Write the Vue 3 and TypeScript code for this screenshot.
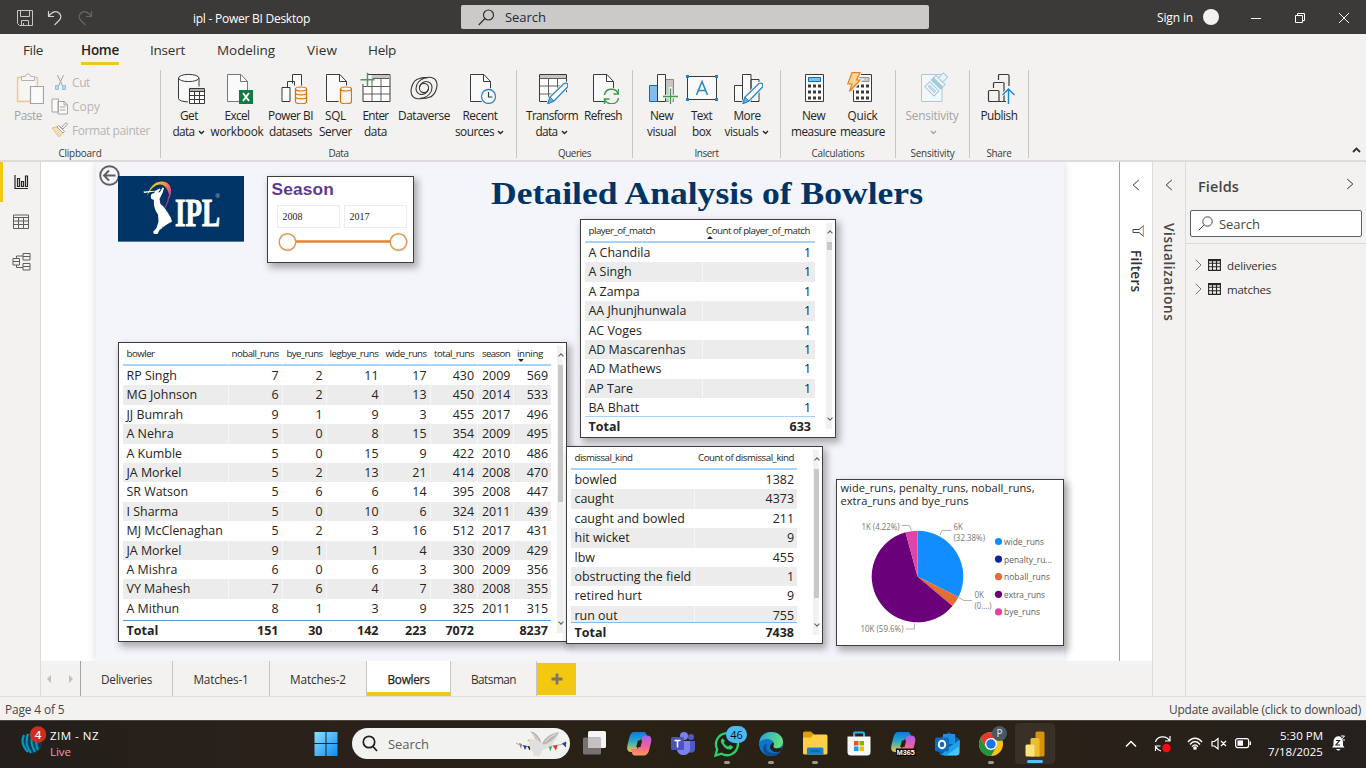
<script setup lang="ts">
type Line = [text: string, width: number]
interface Tool { icon: string; w: number; lines: Line[]; chevron?: boolean; off?: boolean }
interface Group { name: string; labelW: number; w: number; pad: number; tools: Tool[] }

/* Spreads the letters of a label so that it takes the given length along its writing direction. */
const vFit = {
  mounted(el: HTMLElement, binding: { value: number }) {
    const box = el.getBoundingClientRect()
    const length = Math.max(box.width, box.height > 40 ? box.height : 0)
    const count = (el.textContent ?? '').trim().length
    if (count > 0) el.style.letterSpacing = `${((binding.value - length) / count).toFixed(3)}px`
  },
}

const page = '<path d="M6.5 2.5H20l6.500 7V29.500H6.500z" fill="#fafafa" stroke="#3b3a39"/><path d="M19.500 2.500V9.500H26.500" fill="none" stroke="#3b3a39"/>'
const drum = '<path d="M20.500 17v12.500c0 3 11 3 11 0V17" fill="#fff5e8" stroke="#e07000" stroke-width="1.200"/><ellipse cx="26" cy="17" rx="5.500" ry="2" fill="#fafafa" stroke="#e07000" stroke-width="1.200"/>'
const pencil = '<path d="M12 31.500l2-6.500L28 11.500q2-1 3.200.3t.3 3.200L18 29z" fill="#fafafa" stroke="#f3f2f1" stroke-width="3"/><path d="M12 31.500l2-6.500L28 11.500q2-1 3.200.3t.3 3.200L18 29z" fill="#fafafa" stroke="#2b88c8" stroke-width="1.300"/><path d="M12 31.500l2-6.500 4 4z" fill="#69afe5" stroke="#2b88c8"/>'
const keys = '<path d="M10 12.500h3v3h-3zm5 0h3v3h-3zm5 0h3v3h-3zm-10 6h3v3h-3zm5 0h3v3h-3zm5 0h3v3h-3zm-10 6h3v3h-3zm5 0h3v3h-3zm5 0h3v3h-3z" fill="#3b3a39"/>'
const icons: Record<string, string> = {
  paste: '<path d="M5.500 5.500h20v24h-20z" fill="#fbeeda" stroke="#eec690" stroke-width="1.300"/><path d="M8 7.500h15v20H8z" fill="#f7f6f5"/><path d="M9.500 8.500v-4h4c0-3.500 5-3.500 5 0h4v4z" fill="#f7f6f5" stroke="#b5b3b1"/><path d="M18.500 14.500h13v17h-13z" fill="#fafafa" stroke="#a5a3a1" stroke-width="1.200"/>',
  getdata: '<path d="M5.500 6v20.500c0 4.500 20.500 4.500 20.500 0V6" fill="#fafafa" stroke="#3b3a39"/><ellipse cx="15.700" cy="6" rx="10.200" ry="3.600" fill="#fafafa" stroke="#3b3a39"/><path d="M15 14.500h18v18H15z" fill="#f3f2f1"/><path d="M16.500 16.500h15v15h-15z" fill="#fff" stroke="#3b3a39"/><path d="M17 17h14v2.500H17z" fill="#b3b0ad"/><path d="M16.500 19.500h15m-15 4h15m-15 4h15m-10-8v12m5-12v12" stroke="#3b3a39" fill="none"/>',
  excel: '<path d="M6.500 2.500H20l6.500 7V29.500H6.500z" fill="#fafafa" stroke="#797775"/><path d="M19.500 2.500V9.500H26.500" fill="none" stroke="#797775"/><path d="M18 18h14v14H18z" fill="#107c41"/><path d="M22 21l6 8m0-8l-6 8" stroke="#fff" stroke-width="1.900"/>',
  datasets: '<path d="M17.500 11.500v-9h9v14m-14-1v-6h7v20m-12.500-14h8v14H7z" fill="#fafafa" stroke="#3b3a39"/><path d="M19 13.500h13V32H19z" fill="#f3f2f1"/>' + drum + '<path d="M20.500 21c0 2.500 11 2.500 11 0m-11 4c0 2.500 11 2.500 11 0" fill="none" stroke="#e07000" stroke-width="1.200"/>',
  sql: page + '<path d="M18.500 13.500h14v19h-14z" fill="#f3f2f1"/>' + drum,
  enter: '<g transform="translate(-.5 0)"><path d="M3.500 2.500h27v27h-27z" fill="#fff" stroke="#3b3a39"/><path d="M12 3h18v3.500H12z" fill="#c8c6c4"/><path d="M3.500 14.500h27m-27 7.500h27M12.500 7v22m9-22v22M13 6.500h17" stroke="#605e5c" fill="none"/><path d="M0 0h8v12H0z" fill="#f3f2f1"/><path d="M1 7.700h14M8 .7v14" stroke="#4a9b5c" stroke-width="1.500"/></g>',
  dataverse: '<g fill="none" stroke="#3b3a39" stroke-width="1.100"><circle cx="16" cy="16" r="4.600"/><path d="M20.500 17c-1 4-5 6.500-9 5-4.500-2-4.500-8-1-12 3.500-4 9-5.500 13-4.500 5 1.200 6.500 6 5 11C27 22 23.500 25 20.500 25.500c-2 .8-5 1.200-8 .5"/><path d="M11.500 15c1-4 5-6.500 9-5 4.500 2 4.500 8 1 12-3.500 4-9 5.500-13 4.500-5-1.200-6.500-6-5-11C5 10 8.500 7 11.500 6.500c2-.8 5-1.200 8-.5"/></g>',
  recent: page + '<circle cx="24.500" cy="24.500" r="8.500" fill="#f3f2f1"/><circle cx="24.500" cy="24.500" r="7" fill="#fafafa" stroke="#2b88c8" stroke-width="1.300"/><path d="M24.500 20v5h4" fill="none" stroke="#3b3a39" stroke-width="1.200"/>',
  transform: '<path d="M3.500 2.500h27v27h-27z" fill="#fff" stroke="#3b3a39"/><path d="M4 3h26v3.500H4z" fill="#c8c6c4"/><path d="M3.500 6.500h27m-27 7.500h27m-27 8h27M12.500 7v22m9-22v22" stroke="#605e5c" fill="none"/><path d="M24 20h9v12H17z" fill="#f3f2f1"/>' + pencil,
  refresh: page + '<circle cx="24.500" cy="24.500" r="9" fill="#f3f2f1"/><path d="M17.500 23c1-7 11-8 14-1m0-5v5h-5m5 4c-1 7-11 8-14 1m0 5v-5h5" fill="none" stroke="#3f9b4f" stroke-width="1.500"/>',
  visual: '<path d="M3.500 13.500h8v16h-8z" fill="#83bdec" stroke="#0f6cbd"/><path d="M19.500 7.500h8v22h-8z" fill="#c8c6c4" stroke="#8a8886"/><path d="M11.500 2.500h8v27h-8z" fill="#fafafa" stroke="#3b3a39"/><path d="M24.500 15v17M16.500 24.500h16" stroke="#f3f2f1" stroke-width="3.500"/><path d="M24.500 16.500v15.500M17 24.500h15.500" stroke="#3f9b4f" stroke-width="1.300"/>',
  textbox: '<path d="M1.500 4.500h29v23h-29z" fill="#fafafa" stroke="#3b3a39"/><path d="M0 3h3v3H0zm29 0h3v3h-3zM0 26h3v3H0zm29 0h3v3h-3z" fill="#1a86d0"/><path d="M10.500 23L16 9.500 21.500 23M12.500 18.500h7" fill="none" stroke="#2b88c8" stroke-width="1.600"/>',
  more: '<path d="M3.500 13.500h8v16h-8zM20 7.500h8v22h-8zM11.500 2.500h8.500v27h-8.500z" fill="#fafafa" stroke="#3b3a39"/>' + pencil,
  measure: '<path d="M7.500 2.500h18v27h-18z" fill="#fafafa" stroke="#3b3a39"/><path d="M10.500 5.500h12v4h-12z" fill="#83bdec" stroke="#0f6cbd"/>' + keys,
  quick: '<path d="M6.500 2.500h18v27h-18z" fill="#fafafa" stroke="#3b3a39"/><path d="M11 5.500h11v4H11z" fill="#c8c6c4" stroke="#979593"/><g transform="translate(-1 0)">' + keys + '</g><path d="M5 1h8L9.500 8H14L2 20.500 5.500 12H1z" fill="#f3f2f1" stroke="#f3f2f1" stroke-width="3"/><path d="M5 .7h8L9.500 8H13L2.500 19.500 5 12H.7z" fill="#fcd79b" stroke="#e58022" stroke-width="1.200"/>',
  sensitivity: '<path d="M5.500 2.500h20.500v27H5.500z" fill="#f5f6f7" stroke="#9fcbe6"/><g transform="translate(15.500 16.500) rotate(45)" stroke="#9fcbe6" fill="#f5f6f7"><path d="M-6-3.500H7v7H-6z"/><path d="M-3.500-.8h8v1.600h-8z"/></g><g transform="translate(23.500 9) rotate(45)" stroke="#9fcbe6" fill="#f3f2f1"><path d="M-6.500 2h13v3h-13z" fill="#9fcbe6"/><path d="M-6.500-1.500h13v3.500h-13zM-3-8.500h6v7h-6z"/></g>',
  publish: '<path d="M15.500 8V3.500q0-1 1-1H25q1 0 1 1V14M10.500 16v-4.500q0-1 1-1H20q1 0 1 1V29M5.500 19.500q0-1 1-1H15q1 0 1 1v10H6.500q-1 0-1-1zM16 29.500h7" fill="none" stroke="#3b3a39" stroke-width="1.200"/><path d="M25.500 32V17M19.500 23l6-6 6 6" fill="none" stroke="#f3f2f1" stroke-width="3"/><path d="M25.500 32V17M19.500 23l6-6 6 6" fill="none" stroke="#1f86c8" stroke-width="1.400"/>',
}

const menu: { t: string; w: number; gap: number; on?: boolean }[] = [
  { t: 'File', w: 20, gap: 23 }, { t: 'Home', w: 38, gap: 38, on: true }, { t: 'Insert', w: 35, gap: 31 },
  { t: 'Modeling', w: 58, gap: 32 }, { t: 'View', w: 30, gap: 32 }, { t: 'Help', w: 28, gap: 31 },
]

const groups: Group[] = [
  { name: 'Data', labelW: 20, w: 356, pad: 4, tools: [
    { icon: 'getdata', w: 48, lines: [['Get', 18], ['data', 22]], chevron: true },
    { icon: 'excel', w: 48, lines: [['Excel', 25], ['workbook', 53]] },
    { icon: 'datasets', w: 59, lines: [['Power BI', 45], ['datasets', 43]] },
    { icon: 'sql', w: 31, lines: [['SQL', 21], ['Server', 33]] },
    { icon: 'enter', w: 49, lines: [['Enter', 26], ['data', 23]] },
    { icon: 'dataverse', w: 48, lines: [['Dataverse', 52]] },
    { icon: 'recent', w: 64, lines: [['Recent', 35], ['sources', 39]], chevron: true },
  ] },
  { name: 'Queries', labelW: 33, w: 116, pad: 7, tools: [
    { icon: 'transform', w: 56, lines: [['Transform', 52], ['data', 22]], chevron: true },
    { icon: 'refresh', w: 46, lines: [['Refresh', 38]] },
  ] },
  { name: 'Insert', labelW: 24, w: 148, pad: 9, tools: [
    { icon: 'visual', w: 39, lines: [['New', 23], ['visual', 29]] },
    { icon: 'textbox', w: 41, lines: [['Text', 21], ['box', 19]] },
    { icon: 'more', w: 50, lines: [['More', 27], ['visuals', 34]], chevron: true },
  ] },
  { name: 'Calculations', labelW: 53, w: 115, pad: 8, tools: [
    { icon: 'measure', w: 49, lines: [['New', 23], ['measure', 45]] },
    { icon: 'quick', w: 49, lines: [['Quick', 30], ['measure', 45]] },
  ] },
  { name: 'Sensitivity', labelW: 44, w: 74, pad: 0, tools: [
    { icon: 'sensitivity', w: 72, lines: [['Sensitivity', 53], ['', 0]], chevron: true, off: true },
  ] },
  { name: 'Share', labelW: 25, w: 59, pad: 0, tools: [{ icon: 'publish', w: 58, lines: [['Publish', 37]] }] },
]

const bowlerHead: Line[] = [['bowler', 28], ['noball_runs', 47], ['bye_runs', 36], ['legbye_runs', 49], ['wide_runs', 41], ['total_runs', 40], ['season', 28], ['inning', 26]]
const bowlers: (string | number)[][] = [
  ['RP Singh', 7, 2, 11, 17, 430, 2009, 569],
  ['MG Johnson', 6, 2, 4, 13, 450, 2014, 533],
  ['JJ Bumrah', 9, 1, 9, 3, 455, 2017, 496],
  ['A Nehra', 5, 0, 8, 15, 354, 2009, 495],
  ['A Kumble', 5, 0, 15, 9, 422, 2010, 486],
  ['JA Morkel', 5, 2, 13, 21, 414, 2008, 470],
  ['SR Watson', 5, 6, 6, 14, 395, 2008, 447],
  ['I Sharma', 5, 0, 10, 6, 324, 2011, 439],
  ['MJ McClenaghan', 5, 2, 3, 16, 512, 2017, 431],
  ['JA Morkel', 9, 1, 1, 4, 330, 2009, 429],
  ['A Mishra', 6, 0, 6, 3, 300, 2009, 356],
  ['VY Mahesh', 7, 6, 4, 7, 380, 2008, 355],
  ['A Mithun', 8, 1, 3, 9, 325, 2011, 315],
]
const bowlerTotal = ['Total', 151, 30, 142, 223, 7072, '', 8237]

const players = ['A Chandila', 'A Singh', 'A Zampa', 'AA Jhunjhunwala', 'AC Voges', 'AD Mascarenhas', 'AD Mathews', 'AP Tare', 'BA Bhatt']
const dismissals: [string, number][] = [
  ['bowled', 1382], ['caught', 4373], ['caught and bowled', 211], ['hit wicket', 9],
  ['lbw', 455], ['obstructing the field', 1], ['retired hurt', 9], ['run out', 755],
]

const slices = [
  { name: 'wide_runs', w: 40, share: 32.38, color: '#118dff' },
  { name: 'penalty_ru...', w: 48, share: 0, color: '#12239e' },
  { name: 'noball_runs', w: 46, share: 3.8, color: '#e66c37' },
  { name: 'extra_runs', w: 41, share: 59.6, color: '#6b007b' },
  { name: 'bye_runs', w: 36, share: 4.22, color: '#e044a7' },
]
const wedge = (i: number): string => {
  const from = slices.slice(0, i).reduce((sum, s) => sum + s.share, 0)
  const point = (p: number) => {
    const a = (p / 100) * Math.PI * 2
    return `${(80.5 + 45.8 * Math.sin(a)).toFixed(2)} ${(96.5 - 45.8 * Math.cos(a)).toFixed(2)}`
  }
  const to = from + slices[i].share
  return `M80.5 96.5L${point(from)}A45.8 45.8 0 ${slices[i].share > 50 ? 1 : 0} 1 ${point(to)}Z`
}

const pages: { t: string; w: number; tw: number; on?: boolean }[] = [
  { t: 'Deliveries', w: 92, tw: 51 }, { t: 'Matches-1', w: 97, tw: 55 }, { t: 'Matches-2', w: 97, tw: 56 },
  { t: 'Bowlers', w: 84, tw: 42, on: true }, { t: 'Batsman', w: 86, tw: 45 },
]

const copilot = '<path d="M11 4h9.500c2.500 0 3 2 3.500 4.500l.5 2h-4.500c-2.500 0-3.500 1.500-4.500 5l-1.500 5c-1 3-2 3.500-4 3.500H8c-3.500 0-4.500-3-3.500-7l2-8C7.500 5.500 9 4 11 4z" fill="url(#gBlue)"/><path d="M21 27.500h-9c-2.500 0-3-2-3.500-4.500L8 21h4.500c2.500 0 3.500-1.500 4.500-5l1.500-5c1-3 2-3.500 4-3.500h2c3.500 0 4.500 3 3.500 7l-2 8c-1 3.500-3 5-5 5z" fill="url(#gPink)"/><path d="M15 12.500h4.200L17.500 19h-4.300z" fill="#2a2116"/>'
const apps: { id: string; art: string; run?: boolean; badge?: string }[] = [
  { id: 'taskview', art: '<rect x="9" y="3" width="18" height="17" rx="1.500" fill="#f5f5f5"/><rect x="4" y="9.500" width="18" height="17" rx="1.500" fill="#757371"/><path d="M9 9.500h13V20H9z" fill="#c3c2c1"/>' },
  { id: 'copilot', art: copilot },
  { id: 'teams', art: '<circle cx="24" cy="9" r="3" fill="#5059c9"/><circle cx="17" cy="8" r="4" fill="#7b83eb"/><path d="M20 13h8v8c0 5-8 5-8 0z" fill="#5059c9"/><path d="M10 13h13v8c0 8-13 8-13 0z" fill="#7b83eb"/><rect x="4" y="9" width="13" height="13" rx="1.500" fill="#4b53bc"/><path d="M7.500 12.500h6m-3 0v7" stroke="#fff" stroke-width="1.500"/>' },
  { id: 'whatsapp', run: true, badge: '46', art: '<path d="M4.500 27.500l1.700-6.200a11 11 0 1 1 4.200 4.400z" fill="#241f16" stroke="#25d366" stroke-width="2.300"/><path d="M12 10.500c-2 0-3 3-1 5.500 2 3.500 5 6 8.500 5.500 2-.5 3-2.500 2-3.200l-2.600-1.300-1.600 1.600c-2-.5-4-2.600-4.500-4.200l1.200-1.400z" fill="#25d366"/>' },
  { id: 'edge', run: true, art: '<circle cx="16" cy="16" r="12" fill="#1274c4"/><path d="M4.500 14C5 8 10 4 16 4c8 0 12 5 12 10 0 4-3 6-7 6-3 0-4-1-2-3 1-5-8-9-14.500-3z" fill="url(#gEdge)"/><path d="M12 16c-3 7 4 12 14 7-4 7-14 6-17 1-2-4-1-7 3-8z" fill="#0b4f9e"/><path d="M19 16c-1.500 3 0 5 4 4.500 2-.3 4-1.300 4-1.300L26 23c-6 2.500-11 0-11-4 0-3 4-6 4-3z" fill="#262017"/>' },
  { id: 'files', run: true, art: '<path d="M4 5q0-1.500 1.500-1.500H12L15 7v6H4z" fill="#dd9b00"/><rect x="4" y="6.500" width="24.500" height="20" rx="1.500" fill="#ffcf48"/><path d="M4 5.500h11l-3 4H4z" fill="#e0a100"/><path d="M9 19.500h14q1.500 0 1.500 1.500v5.500H8V21q0-1.500 1-1.500z" fill="#1580d0"/><path d="M12 23h9" stroke="#0a5ea8" stroke-width="1.500"/>' },
  { id: 'store', art: '<path d="M11 10V5.500q0-1 1-1h8q1 0 1 1V10" fill="none" stroke="#2bb3ef" stroke-width="2"/><path d="M4.500 8.500h23V24q0 3.500-3.500 3.500H8q-3.500 0-3.500-3.500z" fill="#f8f8f8"/><path d="M11 13h4.500v4.500H11z" fill="#f25022"/><path d="M16.500 13H21v4.500h-4.500z" fill="#7fba00"/><path d="M11 18.500h4.500V23H11z" fill="#00a4ef"/><path d="M16.500 18.500H21V23h-4.500z" fill="#ffb900"/>' },
  { id: 'm365', art: copilot + '<path d="M9 20.500h19.500v7.500H9z" fill="#050505"/><text x="9.700" y="27" font-size="7.200" font-weight="700" fill="#fff" textLength="18" font-family="Liberation Sans">M365</text>' },
  { id: 'outlook', art: '<path d="M8 11L18 4l10.500 7v13q0 3.500-3.500 3.500H12q-4 0-4-4z" fill="#0c59a4"/><path d="M12 6h12v10H12z" fill="#1b8fe0"/><path d="M28.500 12v12q0 3.500-3.500 3.500H13z" fill="#3ecbf5"/><path d="M18 19l10.500-7v6L16 27H10z" fill="#1aa1e8"/><rect x="4" y="9.500" width="14" height="14" rx="2" fill="#0f6cbd"/><ellipse cx="11" cy="16.500" rx="3.200" ry="3.700" fill="none" stroke="#fff" stroke-width="2"/>' },
  { id: 'chrome', run: true, badge: 'P', art: '<circle cx="16" cy="16" r="12" fill="#fbc116"/><path d="M5.600 10A12 12 0 0 1 26.400 10H16l-5 9z" fill="#e33b2e"/><path d="M5.600 10A12 12 0 0 0 16 28l5.200-9H10.800z" fill="#229342"/><circle cx="16" cy="16" r="6" fill="#fff"/><circle cx="16" cy="16" r="4.700" fill="#1a73e8"/>' },
  { id: 'powerbi', art: '<path d="M16.500 5q0-1.500 1.500-1.500h6Q25.500 3.500 25.500 5v22q0 1.500-1.500 1.500h-7.500z" fill="#d9930a"/><path d="M11.500 11.500q0-1.500 1.500-1.500h6q1.500 0 1.500 1.500v17h-9z" fill="#edbd2e"/><path d="M6.500 18q0-1.500 1.500-1.500h6q1.500 0 1.500 1.500v10.500H8q-1.500 0-1.500-1.500z" fill="#fae27f"/>' },
]
</script>

<template>
  <div class="window">
    <header class="titlebar">
      <div class="quick">
        <svg width="16" height="16" viewBox="0 0 16 16" fill="none" stroke="#c8c6c4"><path d="M.5.500h15v15H2.500l-2-2zM3.500.500v6h9v-6M4.500 15.500v-5h7v5M6.500 13v2.500" /></svg>
        <svg width="16" height="16" viewBox="0 0 16 16" fill="none" stroke="#d2d0ce" stroke-width="1.200"><path d="M1.500 1v5.500H7M1.500 6.500C5 1 10 .5 12.500 3.500c2.500 3 1 5.500-.5 7L7.500 15" /></svg>
        <svg width="16" height="16" viewBox="0 0 16 16" fill="none" stroke="#686563" stroke-width="1.200"><path d="M14.500 1v5.500H9M14.500 6.500C11 1 6 .5 3.500 3.500c-2.500 3-1 5.500.5 7L8.500 15" /></svg>
      </div>
      <span class="doc"><span v-fit="117" class="fit">ipl - Power BI Desktop</span></span>
      <div class="finder">
        <svg width="17" height="17" viewBox="0 0 17 17" fill="none" stroke="#323130" stroke-width="1.200"><circle cx="10.500" cy="6" r="5" /><path d="M7 9.500L.700 16" /></svg>
        <span v-fit="41" class="fit">Search</span>
      </div>
      <div class="account"><span v-fit="36" class="fit">Sign in</span><i class="avatar"></i></div>
      <svg class="winctl" width="126" height="34" viewBox="0 0 126 34" fill="none" stroke="#fff"><path d="M11 18.500h10M55.500 15.500h7v7h-7zM57.500 15.500v-2h7v7h-2M99 13l10 10m0-10l-10 10" /></svg>
    </header>

    <nav class="menu">
      <span v-for="m in menu" :key="m.t" class="menu-item" :class="{ on: m.on }" :style="{ marginLeft: m.gap + 'px', width: m.w + 'px' }"><span v-fit="m.w" class="fit">{{ m.t }}</span></span>
    </nav>

    <section class="ribbon">
      <div class="group clipboard">
        <div class="tools">
          <div class="tool off paste">
            <svg width="32" height="32" viewBox="0 0 32 32" v-html="icons.paste"></svg>
            <span class="tool-line"><span v-fit="28" class="fit">Paste</span></span>
          </div>
          <div class="clip-list">
            <div class="clip"><svg width="18" height="18" viewBox="0 0 18 18" fill="none" stroke="#a5a3a1"><path d="M6.500 2l5 11M12.500 2l-5 11" /><path d="M4.500 12.500h3v4h-3zm7 0h3v4h-3z" fill="#b9dbf0" stroke="#8fc3e3" /></svg><span v-fit="18" class="fit">Cut</span></div>
            <div class="clip"><svg width="18" height="18" viewBox="0 0 18 18" fill="#fafafa" stroke="#a5a3a1"><path d="M1 2h6.500v13H1zM7 4.500h6.500l3 3.500v9H7z" /><path d="M9 10h5.500M9 13h5.500M13 4.500V8h3.500" fill="none" /></svg><span v-fit="28" class="fit">Copy</span></div>
            <div class="clip"><svg width="18" height="18" viewBox="0 0 18 18" fill="#f7f6f5" stroke="#a5a3a1"><path d="M1 7l8-2 4 5-5 6z" fill="#fbdcb8" stroke="#e8bd8e" /><path d="M7.500 4.500l6 6-1.500 1.500L6 6zM10.500 6.500L15 1.500l1.500 1.500-4.500 5z" /></svg><span v-fit="78" class="fit">Format painter</span></div>
          </div>
        </div>
        <div class="group-name"><span v-fit="43" class="fit">Clipboard</span></div>
      </div>
      <div v-for="g in groups" :key="g.name" class="group" :style="{ width: g.w + 'px' }">
        <div class="tools" :style="{ paddingLeft: g.pad + 'px' }">
          <div v-for="t in g.tools" :key="t.icon" class="tool" :class="{ off: t.off }" :style="{ width: t.w + 'px' }">
            <svg width="32" height="32" viewBox="0 0 32 32" v-html="icons[t.icon]"></svg>
            <span v-for="(l, i) in t.lines" :key="i" class="tool-line">
              <span v-fit="l[1]" class="fit">{{ l[0] }}</span>
              <svg v-if="t.chevron && i === 1" class="chev" width="7" height="5" viewBox="0 0 7 5"><path d="M1 1l2.500 2.500L6 1" fill="none" stroke="currentColor" stroke-width="1.400" /></svg>
            </span>
          </div>
        </div>
        <div class="group-name"><span v-fit="g.labelW" class="fit">{{ g.name }}</span></div>
      </div>
      <svg class="collapse" width="9" height="6" viewBox="0 0 9 6"><path d="M1 5l3.500-3.500L8 5" fill="none" stroke="#323130" stroke-width="1.800" /></svg>
    </section>

    <main class="work">
      <aside class="views">
        <div class="view on"><svg width="16" height="16" viewBox="0 0 16 16" fill="none" stroke="#252423" stroke-width="1.200"><path d="M1 1v13.500h13M3.500 4.500h2v8h-2zM7.500 7.500h2v5h-2zM11.500 2h2v10.500h-2z" /></svg></div>
        <div class="view"><svg width="16" height="16" viewBox="0 0 16 16" fill="none" stroke="#605e5c"><path d="M.5 1h15v13.500H.5zM.5 3.500h15M.5 7h15M.5 10.500h15M5.500 3.500v11M10.500 3.500v11" /></svg></div>
        <div class="view"><svg width="19" height="19" viewBox="0 1 19 19" fill="none" stroke="#605e5c"><path d="M1 6.500h6.500v6.500H1zM1 9.500h6.500M11 1.500h7V8h-7zM11 4.500h7M11 11.500h7V18h-7zM11 14.500h7M4.500 6.500V4H11M4.500 13v2.500H11" /></svg></div>
      </aside>

      <div class="center">
        <div class="stage">
          <div class="report">
            <svg class="back" width="21" height="21" viewBox="0 0 21 21" fill="none" stroke="#605e5c" stroke-width="1.900"><circle cx="10.500" cy="10.500" r="9.300" /><path d="M16.500 10.500H5M10 5.500l-5 5 5 5" /></svg>

            <svg class="logo" width="126" height="66" viewBox="0 0 126 66">
              <path d="M0 0h126v66H0z" fill="#003366" /><path d="M0 65.500h126" stroke="#5c7896" />
              <path d="M51 20c-1 7-4 13-9 18" fill="none" stroke="#a8358f" stroke-width="1.400" />
              <path d="M29 20C31 12 36 6 43 5.500c8-.5 11 6 10 12l-1.500 5C51 14 47 8.500 42 8.500c-5 0-9 4-13 11.500z" fill="url(#gBall)" />
              <path d="M25.500 15.500l12-.7 4-2.300 1 1-2.500 3 2-.5 2.500-4.500 1.500.5-1.500 5-3 6 1 5c5 4 8 10 10 13l1.500 4.500-6 4-6.500 4.500-2 4h-3.500l-1-2 3.500-4 2-6.500-.5-7c-4-5-4.500-11-4-15.500l-1.500-3.500 2-3 .5-1-11 1.500z" fill="#fff" />
              <path d="M52 47l-8 5M37.500 58.500h3" stroke="#003366" fill="none" stroke-width=".8" />
              <circle cx="36" cy="20.500" r="3.200" fill="#fff" />
              <text x="57" y="50" font-family="Liberation Serif" font-weight="700" font-size="41" fill="#fff" stroke="#fff" stroke-width="1" textLength="45" lengthAdjust="spacingAndGlyphs">IPL</text>
              <text x="97.500" y="21.500" font-family="Liberation Sans" font-size="6" fill="#c6d0dc">®</text>
            </svg>

            <div class="card season">
              <div class="season-name"><span v-fit="62.500" class="fit">Season</span></div>
              <div class="years"><span>2008</span><span>2017</span></div>
              <svg width="132" height="20" viewBox="0 0 132 20"><path d="M18 9.500h96" stroke="#e8832f" stroke-width="2.600" /><circle cx="10.500" cy="10" r="8.300" fill="#fff" stroke="#e8934c" stroke-width="1.500" /><circle cx="121.500" cy="10" r="8.300" fill="#fff" stroke="#e8934c" stroke-width="1.500" /></svg>
            </div>

            <h1 class="title"><svg width="436" height="42" viewBox="0 0 436 42"><text x="1" y="32" textLength="432" lengthAdjust="spacingAndGlyphs">Detailed Analysis of Bowlers</text></svg></h1>

            <div class="card bowler-card">
              <div class="grid-table t-bowler">
                <div class="row head"><span v-for="(h, i) in bowlerHead" :key="h[0]" class="cell" :class="{ sorted: i === 7 }"><span v-fit="h[1]" class="fit">{{ h[0] }}</span></span></div>
                <div class="rows">
                  <div v-for="(r, i) in bowlers" :key="i" class="row"><span v-for="(c, j) in r" :key="j" class="cell">{{ c }}</span></div>
                </div>
                <div class="row total"><span v-for="(c, j) in bowlerTotal" :key="j" class="cell">{{ c }}</span></div>
              </div>
              <div class="scroll s-bowler"><i></i></div>
            </div>

            <div class="card player-card">
              <div class="grid-table t-player">
                <div class="row head"><span class="cell"><span v-fit="66.500" class="fit">player_of_match</span></span><span class="cell sorted up"><span v-fit="104" class="fit">Count of player_of_match</span></span></div>
                <div class="rows">
                  <div v-for="p in players" :key="p" class="row"><span class="cell">{{ p }}</span><span class="cell">1</span></div>
                </div>
                <div class="row total"><span class="cell">Total</span><span class="cell">633</span></div>
              </div>
              <div class="scroll s-player"><i></i></div>
            </div>

            <div class="card dismissal-card">
              <div class="grid-table t-dismissal">
                <div class="row head"><span class="cell"><span v-fit="58" class="fit">dismissal_kind</span></span><span class="cell"><span v-fit="96" class="fit">Count of dismissal_kind</span></span></div>
                <div class="rows">
                  <div v-for="d in dismissals" :key="d[0]" class="row"><span class="cell">{{ d[0] }}</span><span class="cell">{{ d[1] }}</span></div>
                </div>
                <div class="row total"><span class="cell">Total</span><span class="cell">7438</span></div>
              </div>
              <div class="scroll s-dismissal"><i></i></div>
            </div>

            <div class="card pie-card">
              <svg width="226" height="165" viewBox="0 0 226 165">
                <g class="pie-title"><text x="3.500" y="11.500" textLength="194">wide_runs, penalty_runs, noball_runs,</text><text x="3.500" y="24.500" textLength="128">extra_runs and bye_runs</text></g>
                <path v-for="(s, i) in slices" :key="s.name" :d="wedge(i)" :fill="s.color" />
                <g fill="none" stroke="#b3b0ad"><path d="M65 45.500h7.500l2 5M103 55l2-4.500h9M121.500 117.500l5.500 3h8M69 149h8.500v-5.500" /></g>
                <g class="pie-label">
                  <text x="24.500" y="49.500" textLength="38" lengthAdjust="spacingAndGlyphs">1K (4.22%)</text><text x="116.500" y="49.500" textLength="9.500" lengthAdjust="spacingAndGlyphs">6K</text><text x="116.500" y="60.500" textLength="31.500" lengthAdjust="spacingAndGlyphs">(32.38%)</text>
                  <text x="137.500" y="117.500" textLength="9.500" lengthAdjust="spacingAndGlyphs">0K</text><text x="137.500" y="128.500" textLength="17" lengthAdjust="spacingAndGlyphs">(0....)</text><text x="23.500" y="151.500" textLength="43" lengthAdjust="spacingAndGlyphs">10K (59.6%)</text>
                </g>
                <g v-for="(s, i) in slices" :key="'l' + s.name" class="pie-legend"><circle cx="161.500" :cy="61.500 + i * 17.600" r="3.600" :fill="s.color" /><text x="167" :y="65 + i * 17.600" :textLength="s.w" lengthAdjust="spacingAndGlyphs">{{ s.name }}</text></g>
              </svg>
            </div>
          </div>
        </div>
        <div class="pages">
          <div class="arrows"><i class="prev"></i><i class="next"></i></div>
          <div v-for="p in pages" :key="p.t" class="page-tab" :class="{ on: p.on }" :style="{ width: p.w + 'px' }"><span v-fit="p.tw" class="fit">{{ p.t }}</span></div>
          <div class="add"><svg width="12" height="12" viewBox="0 0 12 12"><path d="M6 0.500v11M.5 6h11" stroke="#7a766c" stroke-width="2.800" /></svg></div>
        </div>
      </div>

      <aside class="rail filters">
        <svg width="8" height="12" viewBox="0 0 8 12"><path d="M6.800 1L1.200 6l5.600 5" fill="none" stroke="#323130" /></svg>
        <svg class="funnel" width="12" height="12" viewBox="0 0 12 12"><path d="M11.500.7v10.600L7 7.500H1v-3h6z" fill="none" stroke="#484644" /><path d="M11.300.7v10.600" stroke="#e8a24c" stroke-width="1.200" /></svg>
        <span v-fit="42.500" class="fit upright">Filters</span>
      </aside>
      <aside class="rail visualizations">
        <svg width="8" height="12" viewBox="0 0 8 12"><path d="M6.800 1L1.200 6l5.600 5" fill="none" stroke="#323130" /></svg>
        <span v-fit="98.500" class="fit upright">Visualizations</span>
      </aside>
      <aside class="fields">
        <div class="fields-head"><span v-fit="41" class="fit">Fields</span><svg width="8" height="12" viewBox="0 0 8 12"><path d="M1.200 1l5.600 5-5.600 5" fill="none" stroke="#323130" /></svg></div>
        <div class="fields-search"><svg width="15" height="15" viewBox="0 0 15 15" fill="none" stroke="#484644"><circle cx="9.500" cy="5.500" r="4.700" /><path d="M6 9L.7 14.300" /></svg><span v-fit="41" class="fit">Search</span></div>
        <div class="tables">
          <div v-for="t in ([['deliveries', 49.500], ['matches', 44]] as [string, number][])" :key="t[0]" class="table-row">
            <svg width="7" height="12" viewBox="0 0 7 12"><path d="M.7.7L6 6 .7 11.300" fill="none" stroke="#797775" /></svg>
            <svg width="13" height="12" viewBox="0 0 13 12"><path d="M.6.6h11.800v10.800H.6zM.6 4.200h11.800M.6 7.800h11.800M4.500 2v9.400M8.500 2v9.400" fill="none" stroke="#252423" stroke-width="1.100" /><path d="M0 0h13v2.200H0z" fill="#252423" /></svg>
            <span v-fit="t[1]" class="fit">{{ t[0] }}</span>
          </div>
        </div>
      </aside>
    </main>

    <footer class="status"><span v-fit="59.500" class="fit">Page 4 of 5</span><span v-fit="192" class="fit">Update available (click to download)</span></footer>

    <div class="taskbar">
      <div class="widget">
        <svg width="26" height="34" viewBox="0 0 26 34"><path d="M2 12q10-9 19 2c3 8-2 13-9 15C5 26 0 20 2 12z" fill="#073c4e" /><g fill="none" stroke="#0b95b8" stroke-width="2.200"><path d="M4 10c-3 6-1 12 4 17M8 9c-3 8-1 13 3 19M13 9c-3 8-1 12 2 18M18 11c-3 6-2 9 0 14" /></g><circle cx="18" cy="9.500" r="8.200" fill="#cc2e22" /><text x="14.800" y="14" font-family="Open Sans" font-size="11.500" font-weight="600" fill="#fff">4</text></svg>
        <div class="widget-text"><span v-fit="49" class="fit">ZIM - NZ</span><span v-fit="21" class="fit live">Live</span></div>
      </div>
      <div class="launch">
        <svg class="start" width="24" height="26" viewBox="0 0 24 26"><path d="M.5 1h11v11H.5zM12.500 1h11v11h-11zM.5 13h11v12H.5zM12.500 13h11v12h-11z" fill="url(#gWin)" /></svg>
        <div class="tb-search">
          <svg width="16" height="17" viewBox="0 0 16 17" fill="none" stroke="#1f1f1f" stroke-width="1.700"><circle cx="7" cy="7" r="5.700" /><path d="M11 11.500l4 4.500" /></svg>
          <span v-fit="41" class="fit">Search</span>
          <svg class="dove" width="54" height="28" viewBox="0 0 54 28">
            <path d="M1 13q6 4 18 4 20 0 33-4" fill="none" stroke="#a09890" stroke-width=".8" /><path d="M4 13l3 1-1 5z" fill="#8a8177" /><path d="M8 15l4 1-2 4z" fill="#2440b5" /><path d="M12.500 16h4l-2 4.500z" fill="#222" /><path d="M17 16.500h3.500l-1.500 5z" fill="#efb524" /><path d="M33.500 16.500h3.500l-1.500 5z" fill="#3fae5a" /><path d="M38 16l4.500-1-1.500 5.500z" fill="#d9322a" /><path d="M47 13.500l4-2v6z" fill="#2440b5" />
            <path d="M14 11q2-3 5-2l3 2q4 0 5 3 6-2 11-9l6-3q-2 9-10 15-4 3-7 3l-1 4-3 3-2-2-2 2-1-5q-5-5-4-11z" fill="#e2dedb" />
            <path d="M21 10L15.500 1q8 2 11 12zM27 14q4-10 17-12-4 7-11 11-3 2-6 1z" fill="#bcb6b2" /><path d="M24 12q-3-5-6-8M30 12q5-6 11-8" fill="none" stroke="#e9e6e3" stroke-width=".9" /><path d="M14.500 11l-2.500-.5 2.500-1.200z" fill="#e8932f" />
          </svg>
        </div>
        <div v-for="a in apps" :key="a.id" class="app" :class="{ active: a.id === 'powerbi' }">
          <svg width="32" height="32" viewBox="0 0 32 32" v-html="a.art"></svg>
          <i v-if="a.run" class="dot"></i><i v-if="a.id === 'powerbi'" class="bar"></i>
          <b v-if="a.badge" class="badge" :class="a.id">{{ a.badge }}</b>
        </div>
      </div>
      <div class="tray">
        <svg width="12" height="8" viewBox="0 0 12 8"><path d="M1 6.500L6 1.500l5 5" fill="none" stroke="#fff" stroke-width="1.500" /></svg>
        <svg class="sync" width="18" height="18" viewBox="0 0 18 18" fill="none" stroke="#fff" stroke-width="1.200"><path d="M1.500 7C3 1 12 0 15.500 5.500M16 1v5h-5M7 16c-2-.5-4-2-5-4M1.500 16v-5h5" /><circle cx="12.500" cy="13" r="4.200" fill="#ff0a0a" stroke="none" /></svg>
        <svg class="wifi" width="16" height="13" viewBox="0 0 16 13" fill="none" stroke="#fff" stroke-width="1.300"><path d="M1 5c4-5 10-5 14 0M3 7.500c3-4 7-4 10 0M5 9.700c2-2.500 4-2.500 6 0" /><circle cx="8" cy="11" r="1.200" fill="#fff" /></svg>
        <svg class="mute" width="16" height="13" viewBox="0 0 16 13" fill="none" stroke="#fff" stroke-width="1.200"><path d="M1 4.500h2.500l3.500-3v10.500l-3.500-3H1zM10 4l5 5m0-5l-5 5" /></svg>
        <svg class="power" width="16" height="11" viewBox="0 0 16 11"><rect x=".6" y=".6" width="13" height="9" rx="2" fill="none" stroke="#fff" stroke-width="1.200" /><path d="M2.500 2.500H8v5.200H2.500zM14.500 3.500H16v3.500h-1.500z" fill="#fff" /></svg>
        <div class="clock"><span v-fit="43" class="fit">5:30 PM</span><span v-fit="55" class="fit">7/18/2025</span></div>
        <svg class="bell" width="15" height="17" viewBox="0 0 15 17"><path d="M1 12.500l1.500-2V6C3 1 9 0 10.500 3l1.500 4v3.500l1.500 2zM5 14h4.500q-2 3-4.500 0z" fill="#fff" /><path d="M5 5.500h3.500L5 10h4" fill="none" stroke="#241f1b" stroke-width="1.200" /><path d="M10 1h3.500L10 5h4" fill="none" stroke="#fff" /></svg>
      </div>
    </div>

    <svg width="0" height="0" class="defs"><defs>
      <linearGradient id="gWin" x2="1" y2="1"><stop stop-color="#8ae0ff" /><stop offset="1" stop-color="#0a8df0" /></linearGradient>
      <linearGradient id="gBlue" x2="0" y2="1"><stop stop-color="#1279d8" /><stop offset=".45" stop-color="#26a7cf" /><stop offset="1" stop-color="#f5c92b" /></linearGradient>
      <linearGradient id="gPink" x2="0" y2="1"><stop stop-color="#a55ff0" /><stop offset=".55" stop-color="#f0619b" /><stop offset="1" stop-color="#ff9b51" /></linearGradient>
      <linearGradient id="gEdge" x2="1" y2=".3"><stop stop-color="#249ce5" /><stop offset="1" stop-color="#5fe07c" /></linearGradient>
      <linearGradient id="gBall" x2="1" y2=".6"><stop stop-color="#7fae3c" /><stop offset=".35" stop-color="#f5c518" /><stop offset=".65" stop-color="#f58a4b" /><stop offset="1" stop-color="#d8458f" /></linearGradient>
    </defs></svg>
  </div>
</template>

<style>
html, body { margin: 0; overflow: hidden; }
</style>

<style scoped>
* { box-sizing: border-box; }
.window { width: 1366px; height: 768px; overflow: hidden; display: flex; flex-direction: column; background: #f3f2f1; color: #252423; font-family: "Open Sans", "Noto Sans", sans-serif; font-size: 12px; }
svg { display: block; flex: none; }
.fit { display: inline-block; white-space: pre; flex: none; }
.defs { position: absolute; }

.titlebar { height: 34px; flex: none; background: #3b3a39; color: #fff; display: flex; align-items: center; }
.titlebar > * { flex: none; }
.quick { width: 92px; display: flex; gap: 14px; padding: 2px 0 0 17px; }
.doc { width: 369px; padding: 3px 0 0 101px; font-size: 12px; line-height: 16px; }
.finder { width: 468px; height: 24px; background: #cbcac9; border-radius: 2px; display: flex; align-items: center; gap: 10px; padding-left: 17px; color: #1b2a41; font-size: 13px; }
.account { width: 291px; padding-left: 228px; display: flex; align-items: center; gap: 10px; font-size: 12px; }
.avatar { width: 16px; height: 16px; border-radius: 50%; background: #f3f2f1; flex: none; }
.winctl { margin-left: 20px; }

.menu { height: 36px; flex: none; display: flex; font-size: 13.500px; line-height: 32px; color: #323130; }
.menu-item { height: 31px; flex: none; white-space: nowrap; }
.menu-item.on { font-weight: 600; color: #252423; border-bottom: 3px solid #f2c811; }

.ribbon { height: 92px; flex: none; display: flex; border-bottom: 2px solid #dddcdb; position: relative; }
.group { height: 88px; flex: none; border-right: 1px solid #c8c6c4; display: flex; flex-direction: column; justify-content: space-between; }
.clipboard { width: 161px; }
.tools { display: flex; padding-top: 2px; }
.tool { flex: none; display: flex; flex-direction: column; align-items: center; font-size: 11.800px; }
.tool svg { margin-bottom: 3px; }
.tool-line { height: 16px; display: flex; align-items: center; white-space: nowrap; gap: 3px; line-height: 16px; }
.tool .chev { margin: 2px 1px 0 0; }
.off { color: #a5a3a1; }
.paste { width: 44px; margin-left: 6px; }
.clip-list { display: flex; flex-direction: column; color: #b7b5b3; font-size: 12px; margin-top: -2px; }
.clip { height: 24px; display: flex; align-items: center; gap: 3px; }
.clip svg { margin-left: 1px; }
.group-name { height: 11px; line-height: 12px; text-align: center; font-size: 9.900px; color: #3b3a39; }
.collapse { position: absolute; right: 5px; bottom: 7px; }

.work { height: 535px; flex: none; display: flex; border-bottom: 1px solid #e1dfdd; }
.views { width: 41px; border-right: 1px solid #dcdad8; flex: none; }
.view { height: 40px; display: flex; align-items: center; justify-content: center; padding-left: 2px; }
.view.on { border-left: 3px solid #f2c811; padding-left: 0; }
.center { width: 1078px; flex: none; display: flex; flex-direction: column; }
.stage { height: 499px; overflow: hidden; background: #fff; padding-left: 55px; flex: none; }
.report { position: relative; width: 968px; height: 499px; background: #f4f5fa; box-shadow: 0 0 9px rgba(0, 0, 0, .16); }
.back { position: absolute; left: 3px; top: 3px; }
.logo { position: absolute; left: 22px; top: 14px; }
.card { position: absolute; background: #fff; border: 1px solid #3f3e3d; box-shadow: 3px 4px 7px 1px rgba(0, 0, 0, .3); }
.season { left: 171px; top: 14px; width: 147px; height: 87px; padding: 2px 0 0 3.500px; }
.season-name { font: 700 17.300px/20px "Liberation Sans", sans-serif; color: #5b3a96; height: 26px; }
.years { display: flex; gap: 4px; padding-left: 5px; height: 27px; }
.years span { width: 63px; height: 23px; border: 1px solid #eeedec; font: 10px/21px "Liberation Serif", serif; padding-left: 5px; }
.season svg { margin-left: 5px; }
.title { position: absolute; left: 394px; top: 10px; margin: 0; font: 700 32.500px/42px "Liberation Serif", serif; }
.title svg { fill: #003366; }

.bowler-card { left: 22px; top: 180px; width: 449px; height: 300px; }
.player-card { left: 484px; top: 57px; width: 256px; height: 219px; }
.dismissal-card { left: 470px; top: 284px; width: 257px; height: 198px; }
.pie-card { left: 740px; top: 317px; width: 228px; height: 167px; }
.grid-table { margin-left: 4px; font-size: 12.450px; }
.row { display: grid; height: 19.400px; line-height: 19.400px; }
.cell { text-align: right; padding: 0 3px; white-space: nowrap; border-right: 1px solid rgba(255, 255, 255, .6); position: relative; }
.cell:last-child { border-right: 0; }
.cell:first-child { text-align: left; padding-left: 3.500px; }
.rows .row:nth-child(even) { background: #ececec; }
.rows { overflow: hidden; }
.head { font-size: 9.700px; border-bottom: 2px solid #a6d3fa; }
.total { font-weight: 700; font-size: 12.500px; height: 20px; line-height: 19px; }
.t-bowler { width: 428px; }
.t-bowler .row { grid-template-columns: 105.500px 54px 44px 56px 48px 47.500px 35.500px 37.500px; }
.t-bowler .head { height: 23px; line-height: 22px; }
.t-bowler .head .cell:last-child { padding-right: 8px; }
.t-bowler .rows { height: 254px; }
.t-bowler .cell:nth-child(7) { text-align: left; padding-left: 4px; }
.t-bowler .total { border-top: 1px solid #4a9be6; }
.t-player { width: 230px; }
.t-player .row, .t-dismissal .row { grid-template-columns: 118px 1fr; }
.t-player .head { height: 23px; line-height: 21px; }
.t-player .head .cell:last-child { padding-right: 5px; }
.t-player .rows { height: 173px; }
.t-player .total { border-top: 1px solid #a6d3fa; }
.t-player .cell { padding-right: 4px; }
.t-dismissal { width: 226px; }
.t-dismissal .row { grid-template-columns: 124px 1fr; }
.t-dismissal .head { height: 23px; line-height: 21px; }
.t-dismissal .rows { height: 152px; }
.t-dismissal .total { border-top: 1px solid #7fbdf5; }
.sorted::after { content: ""; position: absolute; left: 4px; bottom: 3px; border: 3px solid transparent; border-top-color: #252423; border-bottom: 0; }
.sorted.up::after { border: 3px solid transparent; border-bottom-color: #252423; border-top: 0; bottom: 2px; }
.scroll { position: absolute; right: 3px; top: 3px; width: 6px; background: #f1f1f1; display: flex; justify-content: center; }
.scroll i { background: #c8c8c8; width: 5px; }
.scroll::before, .scroll::after { content: ""; position: absolute; left: 1.500px; width: 3px; height: 3px; border: solid #605e5c; border-width: 1px 0 0 1px; transform: rotate(45deg); }
.scroll::before { top: 8px; }
.scroll::after { bottom: 9px; transform: rotate(225deg); }
.s-bowler { height: 287px; }
.s-bowler i { height: 137px; margin-top: 19px; }
.s-player { height: 206px; }
.s-player i { height: 8px; margin-top: 19px; }
.s-dismissal { height: 185px; }
.s-dismissal i { height: 129px; margin-top: 19px; }
.pie-title { font-size: 11px; fill: #252423; }
.pie-label { font-size: 8.800px; fill: #777573; }
.pie-legend { font-size: 9.500px; fill: #605e5c; }

.pages { height: 35px; flex: none; display: flex; font-size: 11.800px; color: #323130; }
.arrows { width: 40px; border-right: 1px solid #a5a3a1; display: flex; align-items: center; gap: 18px; padding-left: 6px; }
.arrows i { border: 4px solid transparent; width: 0; height: 0; }
.arrows .prev { border-right-color: #c2c0be; border-left: 0; }
.arrows .next { border-left-color: #c2c0be; border-right: 0; }
.page-tab { flex: none; border-right: 1px solid #c8c6c4; display: flex; align-items: center; justify-content: center; }
.page-tab.on { background: #fff; border-bottom: 4px solid #f2c811; padding-top: 4px; color: #252423; -webkit-text-stroke: .25px #252423; }
.add { width: 39px; height: 32px; margin-top: 2px; background: #f2c811; display: flex; align-items: center; justify-content: center; }

.rail { flex: none; display: flex; flex-direction: column; align-items: center; padding-top: 17px; }
.filters { width: 33px; height: 499px; background: #fff; border-left: 1px solid #a19f9d; }
.funnel { margin: 34px 0 13px 4px; }
.upright { writing-mode: vertical-rl; font-size: 13.500px; font-weight: 600; color: #323130; line-height: 18px; }
.visualizations { width: 34px; border: solid #dddbd9; border-width: 0 1px; }
.visualizations .upright { margin-top: 32px; color: #484644; }
.fields { flex: 1; }
.fields-head { height: 48px; display: flex; align-items: center; justify-content: space-between; padding: 0 12px 0 12px; font-size: 14.500px; font-weight: 600; color: #484644; }
.fields-head svg { margin-top: -4px; }
.fields-search { width: 172px; height: 27px; margin-left: 4px; border: 1px solid #605e5c; border-radius: 2px; background: #fff; display: flex; align-items: center; gap: 6px; padding-left: 7px; font-size: 13px; color: #484644; }
.tables { margin-top: 6px; border-top: 1px solid #dddbd9; padding: 9px 0 0 9px; }
.table-row { height: 24px; display: flex; align-items: center; gap: 6px; font-size: 11.500px; color: #323130; }

.status { height: 23px; flex: none; display: flex; align-items: center; justify-content: space-between; padding: 0 5px; font-size: 11.900px; color: #484644; }

.taskbar { height: 48px; flex: none; background: linear-gradient(90deg, #231f1b, #2b211a 25%, #2a2115 50%, #2a2117 75%, #24201d); box-shadow: inset 0 1px #4a4540; padding-bottom: 1px; display: flex; color: #fff; }
.widget { width: 304px; padding-left: 20px; display: flex; align-items: center; gap: 4px; font-size: 11.500px; line-height: 16px; }
.widget svg { margin-top: -4px; }
.widget-text { display: flex; flex-direction: column; align-items: flex-start; }
.live { color: #ff99a4; }
.launch { width: 752px; display: flex; align-items: center; flex: none; }
.start { margin: 0 14px 0 10px; }
.tb-search { width: 218px; height: 31px; margin-right: 3px; border-radius: 16px; background: #f2f2f0; display: flex; align-items: center; padding-left: 10px; gap: 10px; font-size: 13px; color: #5e5e5c; overflow: hidden; }
.dove { margin-left: 76px; }
.app { width: 44px; height: 44px; display: flex; align-items: center; justify-content: center; position: relative; }
.app.active { width: 40px; height: 41px; margin-left: 2px; background: rgba(255, 255, 255, .07); border-radius: 4px; }
.dot { position: absolute; bottom: 2px; width: 6px; height: 3px; border-radius: 2px; background: #9b9894; }
.bar { position: absolute; bottom: 1px; width: 16px; height: 3px; border-radius: 2px; background: #4cc2ff; }
.badge { position: absolute; left: 21px; top: 4px; height: 17px; width: 21px; border-radius: 9px; background: #4cb8f5; color: #111; font: 400 11px/17px "Open Sans", sans-serif; text-align: center; }
.badge.chrome { left: 23px; top: 4px; width: 15px; height: 15px; line-height: 15px; background: #455a64; color: #e4e9eb; font-size: 10px; }
.tray { display: flex; align-items: center; padding-left: 69px; }
.sync { margin-left: 17px; }
.wifi { margin-left: 15px; }
.mute { margin-left: 8px; }
.power { margin-left: 8px; }
.clock { width: 72px; display: flex; flex-direction: column; align-items: flex-end; font-size: 11.500px; line-height: 16px; }
.bell { margin-left: 8px; }
</style>
